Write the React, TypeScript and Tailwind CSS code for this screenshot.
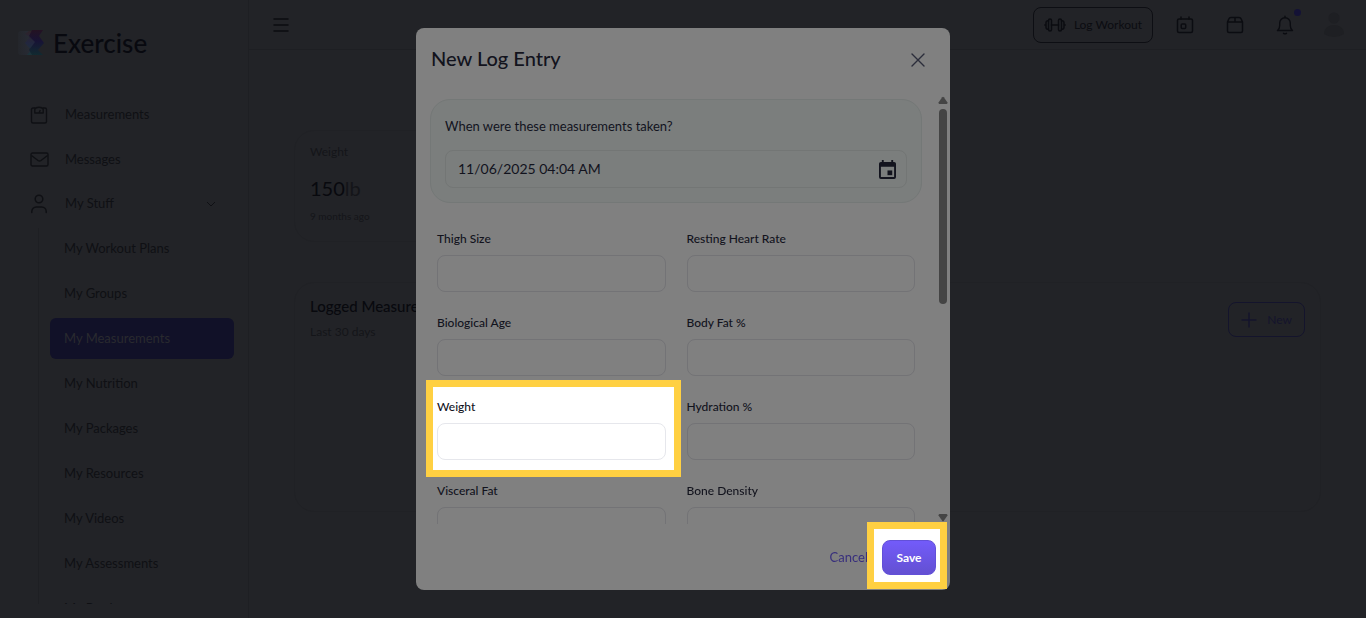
import { useState } from "react";

const stuffItems = [
  "My Workout Plans",
  "My Groups",
  "My Measurements",
  "My Nutrition",
  "My Packages",
  "My Resources",
  "My Videos",
  "My Assessments",
  "My Products",
];

const fields = [
  "Thigh Size",
  "Resting Heart Rate",
  "Biological Age",
  "Body Fat %",
  "Weight",
  "Hydration %",
  "Visceral Fat",
  "Bone Density",
];

function Logo() {
  return (
    <svg width="28" height="28" viewBox="0 0 28 28" aria-hidden="true">
      <defs>
        <linearGradient id="band" x1="0" y1="0" x2="0" y2="1">
          <stop offset="0" stopColor="#241222" />
          <stop offset="0.45" stopColor="#171335" />
          <stop offset="1" stopColor="#112a30" />
        </linearGradient>
        <linearGradient id="mid" x1="0" y1="0" x2="0" y2="1">
          <stop offset="0" stopColor="#2e2229" />
          <stop offset="0.5" stopColor="#22263f" />
          <stop offset="1" stopColor="#1b3439" />
        </linearGradient>
        <linearGradient id="haze" x1="0" y1="0" x2="1" y2="0">
          <stop offset="0" stopColor="#24262b" />
          <stop offset="1" stopColor="#282c38" />
        </linearGradient>
      </defs>
      <path d="M4 2h14l-6 7 5 5-5 6 6 6H4a3 3 0 0 1-3-3V5a3 3 0 0 1 3-3z" fill="url(#haze)" />
      <path d="M12 2h8l-5 6 5 6-6 7 5 5h-9l4-5-6-7 5-6-5-3z" fill="url(#mid)" />
      <path d="M15 1h11l-4 6 5 7-6 7 5 5H15l-3-5 6-8-6-6z" fill="url(#band)" />
    </svg>
  );
}

function ScaleIcon() {
  return (
    <svg width="18" height="18" viewBox="0 0 18 18" fill="none" stroke="currentColor" strokeWidth="1.4" strokeLinejoin="round">
      <path d="M5 2H3a1.500 1.500 0 0 0-1.500 1.500v12A1.500 1.500 0 0 0 3 17h12a1.500 1.500 0 0 0 1.500-1.500v-12A1.500 1.500 0 0 0 15 2h-2" />
      <path d="M4.800 3.200C6 .6 12 .6 13.200 3.200V7H4.800zM9 7l1.300-3" />
    </svg>
  );
}

function MailIcon() {
  return (
    <svg width="19" height="15" viewBox="0 0 19 15" fill="none" stroke="currentColor" strokeWidth="1.4" strokeLinejoin="round">
      <rect x="1" y="1" width="17" height="13" rx="1.500" />
      <path d="m1.500 3.500 6.500 5q1.500 1 3 0l6.500-5" />
    </svg>
  );
}

function UserIcon() {
  return (
    <svg width="18" height="20" viewBox="0 0 18 20" fill="none" stroke="currentColor" strokeWidth="1.5" strokeLinecap="round">
      <circle cx="9" cy="5" r="3.800" />
      <path d="M1.800 18.500v-1a4.500 4.500 0 0 1 4.500-4.500h5.400a4.500 4.500 0 0 1 4.500 4.500v1" />
    </svg>
  );
}

function DumbbellIcon() {
  return (
    <svg width="22" height="14" viewBox="0 0 22 14" fill="none" stroke="currentColor" strokeWidth="1.5" strokeLinecap="round">
      <rect x="4.500" y="1" width="3" height="12" rx="1.500" />
      <rect x="14.500" y="1" width="3" height="12" rx="1.500" />
      <path d="M4.500 2.800a2 2 0 0 0-2.500 2v4.400a2 2 0 0 0 2.500 2M17.500 2.800a2 2 0 0 1 2.500 2v4.400a2 2 0 0 1-2.500 2M7.500 7h7M.8 7h1.200M20 7h1.200" />
    </svg>
  );
}

function AgendaIcon() {
  return (
    <svg width="18" height="18" viewBox="0 0 18 18" fill="none" stroke="currentColor" strokeWidth="1.5" strokeLinecap="round">
      <rect x="1.500" y="3" width="15" height="13.500" rx="1.500" />
      <path d="M5 1v2M13 1v2" />
      <rect x="5.200" y="8" width="4.500" height="4.500" rx="1" />
    </svg>
  );
}

function BoxIcon() {
  return (
    <svg width="18" height="18" viewBox="0 0 18 18" fill="none" stroke="currentColor" strokeWidth="1.5" strokeLinejoin="round">
      <path d="M1.500 6v9A1.500 1.500 0 0 0 3 16.500h12a1.500 1.500 0 0 0 1.500-1.500V6M1.500 6l1.300-3A2.500 2.500 0 0 1 5 1.500h8a2.500 2.500 0 0 1 2.200 1.500L16.500 6zM9 1.500V6" />
    </svg>
  );
}

function BellIcon() {
  return (
    <svg width="18" height="20" viewBox="0 0 18 20" fill="none" stroke="currentColor" strokeWidth="1.4" strokeLinecap="round" strokeLinejoin="round">
      <path d="M9 1.200v1.600M1.500 15.500h15c-1.600-1.200-2.200-2.500-2.200-5V8a5.300 5.300 0 0 0-10.600 0v2.500c0 2.500-.6 3.800-2.200 5zM7.500 18.300q1.500.9 3 0" />
    </svg>
  );
}

function CalendarIcon() {
  return (
    <svg width="17" height="19" viewBox="0 0 18 20" fill="currentColor">
      <path d="M3 0h2v2h8V0h2v2h1a2 2 0 0 1 2 2v14a2 2 0 0 1-2 2H2a2 2 0 0 1-2-2V4a2 2 0 0 1 2-2h1zM2 7v11h14V7z" fillRule="evenodd" />
      <rect x="9" y="11" width="5" height="5" />
    </svg>
  );
}

function Sidebar() {
  return (
    <aside className="flex w-[249px] shrink-0 flex-col border-r border-[#1e1f23] pb-[14px]">
      <div className="flex h-[94px] shrink-0 items-center gap-2 pb-2 pl-[17px]">
        <Logo />
        <span className="text-[26px] font-medium text-[#08090f]">Exercise</span>
      </div>
      <nav className="flex min-h-0 flex-1 flex-col gap-1 overflow-hidden text-[13px] text-[#0f1014]">
        <a href="#measurements" className="flex h-[41px] shrink-0 items-center pl-[30px]">
          <span className="flex w-[35px]"><ScaleIcon /></span>
          Measurements
        </a>
        <a href="#messages" className="flex h-[41px] shrink-0 items-center pl-[30px]">
          <span className="flex w-[35px]"><MailIcon /></span>
          Messages
        </a>
        <button className="flex h-10 shrink-0 items-center pl-[30px] pr-8 text-left">
          <span className="flex w-[35px]"><UserIcon /></span>
          <span className="flex-1">My Stuff</span>
          <svg width="10" height="6" viewBox="0 0 10 6" fill="none" stroke="currentColor">
            <path d="m1 1 4 4 4-4" />
          </svg>
        </button>
        <div className="ml-[38px] mr-[14px] flex flex-col gap-1 border-l border-[#1e1f23] pl-[11px]">
          {stuffItems.map((item) => (
            <a
              key={item}
              href="#stuff"
              className={`flex h-[41px] shrink-0 items-center rounded-md px-[14px] ${item === "My Measurements" ? "bg-[#111128] text-[#292a2f]" : ""}`}
            >
              {item}
            </a>
          ))}
        </div>
      </nav>
    </aside>
  );
}

function TopBar() {
  return (
    <header className="flex h-[50px] items-center justify-between border-b border-[#1e1f23] pl-6 pr-[22px] text-[#0b0c11]">
      <button aria-label="Menu">
        <svg width="16" height="14" viewBox="0 0 16 14" stroke="currentColor" strokeWidth="1.5" strokeLinecap="round">
          <path d="M1 1h14M1 7h14M1 13h14" />
        </svg>
      </button>
      <div className="flex items-center">
        <button className="flex h-9 items-center gap-2 rounded-lg border border-[#0d0e13] px-[10px] text-xs">
          <DumbbellIcon />
          Log Workout
        </button>
        <button aria-label="Calendar" className="ml-[23px]"><AgendaIcon /></button>
        <button aria-label="Packages" className="ml-8"><BoxIcon /></button>
        <button aria-label="Notifications" className="relative ml-8">
          <BellIcon />
          <span className="absolute -right-[7px] -top-[6px] size-[7px] rounded-full bg-[#141236]" />
        </button>
        <button aria-label="Account" className="ml-[30px]">
          <svg width="20" height="26" viewBox="0 0 20 26" fill="#1e1f23">
            <circle cx="10" cy="6" r="5.500" />
            <path d="M0 22c0-12 20-12 20 0q-10 6-20 0z" />
          </svg>
        </button>
      </div>
    </header>
  );
}

function Dashboard() {
  return (
    <main className="flex flex-1 flex-col gap-10 py-20 pl-[45px] pr-[45px] text-[#141519]">
      <section className="flex h-[112px] w-[220px] flex-col rounded-[20px] border border-[#202125] px-[15px] py-[11px]">
        <p className="text-xs leading-5">Weight</p>
        <p className="mt-3 text-xl leading-7">
          <span className="text-[#08090e]">150</span>lb
        </p>
        <p className="mt-2 text-[10px] leading-3">9 months ago</p>
      </section>
      <section className="flex h-[230px] items-start justify-between rounded-[20px] border border-[#202125] px-[15px] py-[11px]">
        <div>
          <h2 className="text-[15px] font-medium leading-6 text-[#08090e]">Logged Measurements</h2>
          <p className="mt-1 text-xs leading-5">Last 30 days</p>
        </div>
        <button className="mt-2 flex h-[35px] items-center gap-[10px] rounded-lg border border-[#14142c] px-3 text-xs text-[#14142c]">
          <svg width="16" height="16" viewBox="0 0 16 16" stroke="currentColor" strokeWidth="1.5" strokeLinecap="round">
            <path d="M8 1v14M1 8h14" />
          </svg>
          New
        </button>
      </section>
    </main>
  );
}

function ScrollRail() {
  return (
    <div className="flex w-[10px] flex-col items-center justify-between pb-[2px] pt-1" aria-hidden="true">
      <svg width="10" height="8" viewBox="0 0 10 8" fill="#444444"><path d="M4.200 1.300a1 1 0 0 1 1.600 0L9.500 6.500Q9.500 8 8.500 8h-7Q.5 8 .5 6.500z" /></svg>
      <div className="mb-auto mt-[5px] h-[195px] w-2 rounded-full bg-[#444444]" />
      <svg width="10" height="8" viewBox="0 0 10 8" fill="#444444"><path d="M5.800 6.700a1 1 0 0 1-1.600 0L.5 1.500Q.5 0 1.500 0h7q1 0 1 1.500z" /></svg>
    </div>
  );
}

function LogEntryDialog() {
  const [date, setDate] = useState("11/06/2025 04:04 AM");
  const [values, setValues] = useState<Record<string, string>>({});

  return (
    <div className="fixed inset-0 flex justify-center py-7">
      <div role="dialog" aria-label="New Log Entry" className="flex w-full max-w-[534px] flex-col rounded-lg bg-[#808080] text-[#12131d]">
        <div className="flex h-16 shrink-0 items-center justify-between pl-[15px] pr-[25px]">
          <h1 className="pb-1 text-xl font-medium">New Log Entry</h1>
          <button aria-label="Close" className="text-[#2b2d3b]">
            <svg width="14" height="14" viewBox="0 0 14 14" stroke="currentColor" strokeWidth="1.4" strokeLinecap="round">
              <path d="m1 1 12 12M13 1 1 13" />
            </svg>
          </button>
        </div>

        <div className="flex min-h-0 flex-1 gap-4 pr-[2px]">
          <div className="min-w-0 flex-1 overflow-hidden pl-[14px] pt-[7px]">
            <div className="rounded-[20px] border border-[#747877] bg-[#7b7e7d] p-[14px]">
              <label htmlFor="taken" className="block text-[13px] leading-6">When were these measurements taken?</label>
              <div className="mt-3 flex h-[38px] items-center rounded-lg border border-[#737675] pl-3 pr-[10px]">
                <input
                  id="taken"
                  className="min-w-0 flex-1 bg-transparent text-sm outline-none"
                  value={date}
                  onChange={(e) => setDate(e.target.value)}
                />
                <button aria-label="Choose date" className="text-[#13141e]"><CalendarIcon /></button>
              </div>
            </div>

            <div className="mt-[26px] grid grid-cols-2 gap-[21px] px-[7px]">
              {fields.map((name) => {
                const active = name === "Weight";
                return (
                  <div key={name} className="relative">
                    {active && <div className="absolute -bottom-[17px] -left-[11px] -right-[15px] -top-[17px] border-[7px] border-[#ffd042] bg-white" />}
                    <label htmlFor={name} className="relative block text-xs font-medium leading-5">{name}</label>
                    <input
                      id={name}
                      className={`relative mt-[6px] block h-[37px] w-full rounded-lg border bg-transparent px-3 text-sm outline-none ${active ? "border-[#e6e7ec]" : "border-[#737376]"}`}
                      value={values[name] || ""}
                      onChange={(e) => setValues({ ...values, [name]: e.target.value })}
                    />
                  </div>
                );
              })}
            </div>
          </div>
          <ScrollRail />
        </div>

        <div className="flex h-[66px] shrink-0 items-center justify-end pr-[14px] text-[13px]">
          <button className="pr-[14px] pt-[2px] text-[#382f7c]">Cancel</button>
          <div className="relative">
            <div className="absolute -bottom-[14px] -left-[15px] -right-[11px] -top-[18px] border-[7px] border-[#ffd042] bg-white" />
            <button className="relative block h-[35px] min-w-[54px] rounded-lg border border-[#6250d8] bg-linear-to-b from-[#735bfa] to-[#6350d2] px-3 pt-[2px] text-xs font-bold text-white">Save</button>
          </div>
        </div>
      </div>
    </div>
  );
}

export default function App() {
  return (
    <div className="flex h-screen overflow-hidden bg-[#222327] font-['Lato','Liberation_Sans',sans-serif]">
      <Sidebar />
      <div className="flex min-w-0 flex-1 flex-col">
        <TopBar />
        <Dashboard />
      </div>
      <LogEntryDialog />
    </div>
  );
}
